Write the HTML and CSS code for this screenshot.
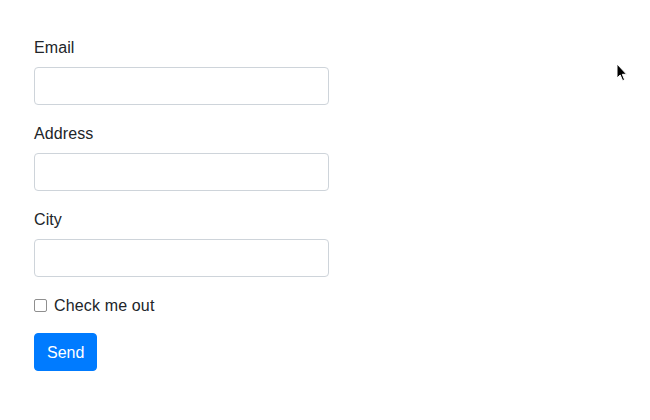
FILE: index.html
```html
<!DOCTYPE html>
<html>
<head>
<meta charset="utf-8">
<link rel="stylesheet" href="styles.css">
</head>
<body>
<form class="form">
  <div class="group">
    <label class="label" for="email">Email</label>
    <input class="input" id="email" type="text">
  </div>
  <div class="group">
    <label class="label" for="address">Address</label>
    <input class="input" id="address" type="text">
  </div>
  <div class="group">
    <label class="label" for="city">City</label>
    <input class="input" id="city" type="text">
  </div>
  <div class="group check">
    <input class="check-input" id="chk" type="checkbox">
    <label class="check-label" for="chk">Check me out</label>
  </div>
  <button class="btn" type="button">Send</button>
</form>
<svg class="cursor" width="12" height="19" viewBox="0 0 12 19">
  <path d="M1 1 L1 15 L4.2 12 L6.6 17.6 L8.6 16.8 L6.3 11.3 L10.6 11.3 Z" fill="#000" stroke="#fff" stroke-width="1"/>
</svg>
</body>
</html>
```
FILE: styles.css
```css
html, body {
  margin: 0;
  padding: 0;
  background: #fff;
}
body {
  font-family: "Liberation Sans", Arial, Helvetica, sans-serif;
  font-size: 16px;
  line-height: 1.5;
  color: #212529;
}
.form {
  width: 295px;
  padding: 35px 34px;
}
.group {
  margin-bottom: 16px;
}
.label {
  display: block;
  padding-top: 1px;
  margin-bottom: 7px;
  letter-spacing: 0.1px;
}
.input {
  display: block;
  box-sizing: border-box;
  width: 100%;
  height: 38px;
  margin: 0;
  padding: 6px 12px;
  font: inherit;
  color: #495057;
  background: #fff;
  border: 1px solid #ced4da;
  border-radius: 4px;
  outline: none;
}
.check {
  position: relative;
  padding-left: 20px;
  height: 24px;
}
.check-input {
  position: absolute;
  left: 0;
  top: 6px;
  margin: 0;
  width: 13px;
  height: 13px;
  -webkit-appearance: none;
  appearance: none;
  box-sizing: border-box;
  border: 1px solid #8f8f8f;
  border-radius: 2px;
  background: #fff;
}
.check-label {
  display: inline-block;
  padding-top: 1px;
  letter-spacing: 0.15px;
}
.btn {
  display: inline-block;
  margin: 0;
  padding: 7px 12px 5px;
  font: inherit;
  line-height: 24px;
  color: #fff;
  background: #007bff;
  border: 1px solid #007bff;
  border-radius: 4px;
}
.cursor {
  position: absolute;
  left: 616px;
  top: 63px;
}
```
